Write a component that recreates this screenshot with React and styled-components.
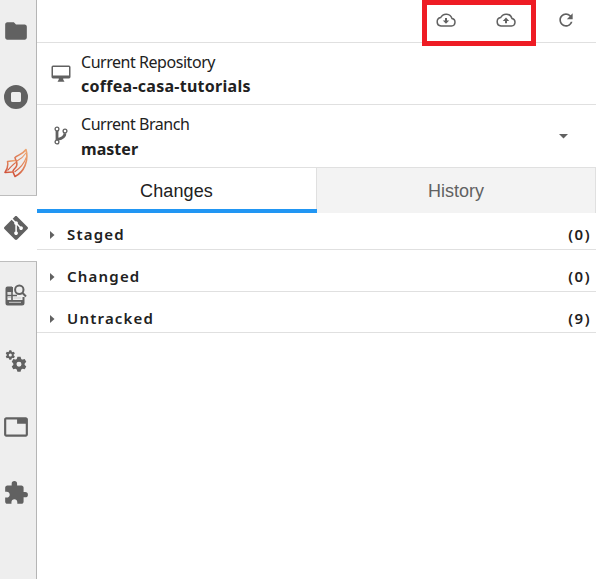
import React from "react";
import styled, { createGlobalStyle } from "styled-components";
import { MdFolder, MdExtension, MdTab, MdRefresh } from "react-icons/md";
import { SiGit } from "react-icons/si";

const GlobalStyle = createGlobalStyle`
  * { box-sizing: border-box; }
  body { margin: 0; background: #fff; overflow: hidden; }
  svg { display: block; flex: none; }
`;

const Shell = styled.div`
  display: grid;
  grid-template-columns: 37px 1fr;
  width: 596px;
  height: 579px;
  background: #fff;
  color: #616161;
`;

const ActivityBar = styled.nav`
  display: flex;
  flex-direction: column;
  background: #eee;
`;

const ActivityButton = styled.div`
  height: ${(p) => p.$height || 66}px;
  padding-top: ${(p) => p.$top || 0}px;
  padding-left: ${(p) => p.$left || 0}px;
  background: ${(p) => (p.$active ? "#fff" : "#eee")};
  border-right: 1px solid ${(p) => (p.$active ? "#fff" : "#b5b5b5")};
`;

const ActiveFrame = styled.div`
  height: 67px;
  border-top: 1px solid #bdbdbd;
  border-bottom: 1px solid #bdbdbd;
`;

const ActivityFill = styled.div`
  flex: 1;
  border-right: 1px solid #b5b5b5;
`;

const Panel = styled.main`
  display: flex;
  flex-direction: column;
  min-width: 0;
`;

const Toolbar = styled.header`
  display: flex;
  height: 43px;
  border-bottom: 1px solid #e0e0e0;
  padding-left: 385px;
`;

const Highlight = styled.div`
  position: relative;
  z-index: 1;
  display: flex;
  gap: 40px;
  width: 114px;
  height: 46px;
  flex: none;
  border: 5px solid #ee1c24;
  padding: 7px 0 0 9px;
`;

const RefreshSlot = styled.div`
  padding: 10px 0 0 20px;
`;

const InfoRow = styled.section`
  display: flex;
  height: ${(p) => p.$height}px;
  border-bottom: 1px solid #e0e0e0;
`;

const InfoIcon = styled.div`
  width: 44px;
  padding: ${(p) => p.$top}px 0 0 ${(p) => p.$left}px;
`;

const InfoText = styled.div`
  flex: 1;
  padding-top: 7px;
  font-family: "Noto Sans", sans-serif;
  font-size: 16px;
  line-height: ${(p) => p.$line}px;
  color: #212121;
`;

const InfoLabel = styled.div`
  letter-spacing: ${(p) => p.$spacing}px;
`;

const InfoValue = styled.div`
  font-weight: 700;
  letter-spacing: ${(p) => p.$spacing}px;
`;

const CaretSlot = styled.div`
  padding: 29px 28px 0 0;
`;

const Tabs = styled.div`
  display: grid;
  grid-template-columns: 280px 1fr;
  grid-template-rows: 45px;
  height: 45px;
  flex: none;
`;

const Tab = styled.div`
  height: 45px;
  border-right: 1px solid #e0e0e0;
  background: #f3f3f3;
  color: #616161;
  font: 18px/46px "Liberation Sans", sans-serif;
  text-align: center;
`;

const ActiveTab = styled(Tab)`
  border-right: 0;
  padding-right: 1px;
  border-bottom: 4px solid #2196f3;
  background: linear-gradient(#e0e0e0, #e0e0e0) right / 1px 100% no-repeat #fff;
  color: #212121;
  letter-spacing: 0.1px;
`;

const FileGroup = styled.div`
  display: flex;
  align-items: flex-start;
  height: ${(p) => p.$height}px;
  padding: ${(p) => p.$top}px 5px 0 12px;
  border-bottom: 1px solid #e0e0e0;
  font: 600 15px/20px "Noto Sans", sans-serif;
  color: #212121;
`;

const GroupCaret = styled.div`
  width: 18px;
  padding: 7px 0 0 1px;
`;

const GroupName = styled.div`
  flex: 1;
  letter-spacing: 1.2px;
`;

const GroupCount = styled.div`
  letter-spacing: 1.5px;
`;

function RunningIcon() {
  return (
    <svg width="24" height="24" viewBox="0 0 24 24">
      <path fill="#616161" fillRule="evenodd" d="M12 0a12 12 0 1 0 0 24 12 12 0 0 0 0-24ZM8.500 7h7A1.500 1.500 0 0 1 17 8.500v7a1.500 1.500 0 0 1-1.500 1.500h-7A1.500 1.500 0 0 1 7 15.500v-7A1.500 1.500 0 0 1 8.500 7Z" />
    </svg>
  );
}

function WingIcon() {
  return (
    <svg width="25" height="30" viewBox="0 0 25 30" fill="none" strokeLinejoin="round">
      <defs>
        <linearGradient id="wing" x1="0" y1="1" x2="1" y2="0">
          <stop offset="0" stopColor="#cf4f38" />
          <stop offset="1" stopColor="#eea873" />
        </linearGradient>
      </defs>
      <g stroke="url(#wing)">
        <path strokeWidth="1.600" d="M22 1.500C19 6 14 7 11 9.500C11.500 13 14 14 12.500 18C11.500 21 8.500 21 9 24L11 28.500C20 24 25 13 22 1.500Z" />
        <path strokeWidth="1.500" d="M11 12.500L3.500 13.500C4.500 18 3.500 21 1 24.500L9 24" />
        <path strokeWidth="1.100" d="M3.500 22.500C6 20 9 16 12 14.500M10.500 24C15 21 20 16 22.500 9M13 13C17 11 20 8 22 5" />
      </g>
    </svg>
  );
}

function TableSearchIcon() {
  return (
    <svg width="22" height="23" viewBox="0 0 22 23" fill="none" stroke="#616161">
      <path d="M7 3.500H2.500Q1.500 3.500 1.500 4.500V19.500Q1.500 20.500 2.500 20.500H17Q18.500 20.500 18.500 19V13" strokeWidth="2" />
      <path fill="#616161" stroke="none" d="M1 3H8V8H1ZM2 16H18V21H2Z" />
      <path d="M7 7V20M2 11.500H12" strokeWidth="1.600" />
      <path d="M3 9H6M3 13.500H6M8.500 14H16M4 18.300H16" stroke="#ccc" />
      <circle cx="14.300" cy="5.800" r="4.200" strokeWidth="2" />
      <path d="M17.300 8.800L21 12.500" strokeWidth="2" />
    </svg>
  );
}

const toothAngles = [0, 60, 120, 180, 240, 300];

function Gear({ x, y, scale }) {
  return (
    <g transform={`translate(${x} ${y}) scale(${scale})`}>
      <circle r="3.900" fill="none" stroke="#616161" strokeWidth="3" />
      {toothAngles.map((a) => (
        <path key={a} transform={`rotate(${a})`} fill="#616161" d="M-2.300 -4.500L-1.500 -7.200H1.500L2.300 -4.500Z" />
      ))}
    </g>
  );
}

function GearsIcon() {
  return (
    <svg width="24" height="24" viewBox="0 0 24 24">
      <Gear x="5.300" y="5" scale="0.650" />
      <Gear x="14" y="14.200" scale="1.040" />
    </svg>
  );
}

function CloudIcon({ up }) {
  return (
    <svg width="20" height="16" viewBox="0 0 20 16">
      <path fill="none" stroke="#616161" strokeWidth="1.500" d="M5 14H15.500A3.800 3.800 0 0 0 16 6.500A6.100 6.100 0 0 0 4.700 5.500A4.300 4.300 0 0 0 5 14Z" />
      <path fill="#616161" d={up ? "M10 5.500L13.200 8.900H11V11.300H9V8.900H6.800Z" : "M10 11.800L6.800 8.400H9V6H11V8.400H13.200Z"} />
    </svg>
  );
}

function MonitorIcon() {
  return (
    <svg width="20" height="18" viewBox="0 0 20 18">
      <path fill="#616161" fillRule="evenodd" d="M2 0.500H18A1.600 1.600 0 0 1 19.500 2V12A1.600 1.600 0 0 1 18 13.500H12.200V14.500L13.500 16.800H6.500L7.800 14.500V13.500H2A1.600 1.600 0 0 1 0.500 12V2A1.600 1.600 0 0 1 2 0.500ZM2 2V10.500H18V2Z" />
    </svg>
  );
}

function BranchIcon() {
  return (
    <svg width="14" height="19" viewBox="0 0 14 19" fill="none" stroke="#616161">
      <path strokeWidth="2.800" d="M3 5V14M11 7.200C11 11 8 12.500 3.500 13.500" />
      <g strokeWidth="1.300" fill="#fff">
        <circle cx="3" cy="3" r="1.900" />
        <circle cx="3" cy="16" r="1.900" />
        <circle cx="11" cy="5" r="1.900" />
      </g>
    </svg>
  );
}

function Caret() {
  return (
    <svg width="5" height="8" viewBox="0 0 5 8">
      <path fill="#616161" d="M0 0L4.500 4L0 8Z" />
    </svg>
  );
}

const groups = [
  { name: "Staged", count: 0, height: 37, top: 11 },
  { name: "Changed", count: 0, height: 42, top: 16 },
  { name: "Untracked", count: 9, height: 41, top: 16 },
];

export default function App() {
  return (
    <Shell>
      <GlobalStyle />
      <ActivityBar>
        <ActivityButton $top={18} $left={3}><MdFolder size={26} /></ActivityButton>
        <ActivityButton $top={19} $left={4}><RunningIcon /></ActivityButton>
        <ActivityButton $height={63} $top={16} $left={4}><WingIcon /></ActivityButton>
        <ActiveFrame>
          <ActivityButton $active $height={65} $top={20} $left={4}><SiGit size={24} /></ActivityButton>
        </ActiveFrame>
        <ActivityButton $top={22} $left={5}><TableSearchIcon /></ActivityButton>
        <ActivityButton $top={22} $left={5}><GearsIcon /></ActivityButton>
        <ActivityButton $top={20} $left={3}><MdTab size={26} /></ActivityButton>
        <ActivityButton $top={20} $left={3}><MdExtension size={26} /></ActivityButton>
        <ActivityFill />
      </ActivityBar>
      <Panel>
        <Toolbar>
          <Highlight><CloudIcon /><CloudIcon up /></Highlight>
          <RefreshSlot><MdRefresh size={20} /></RefreshSlot>
        </Toolbar>
        <InfoRow $height={62}>
          <InfoIcon $top={22} $left={14}><MonitorIcon /></InfoIcon>
          <InfoText $line={24}>
            <InfoLabel $spacing={-0.46}>Current Repository</InfoLabel>
            <InfoValue $spacing={0.27}>coffea-casa-tutorials</InfoValue>
          </InfoText>
        </InfoRow>
        <InfoRow $height={63}>
          <InfoIcon $top={21} $left={17}><BranchIcon /></InfoIcon>
          <InfoText $line={25}>
            <InfoLabel $spacing={-0.46}>Current Branch</InfoLabel>
            <InfoValue $spacing={0.05}>master</InfoValue>
          </InfoText>
          <CaretSlot>
            <svg width="9" height="5" viewBox="0 0 9 5"><path fill="#616161" d="M0 0H9L4.500 4.500Z" /></svg>
          </CaretSlot>
        </InfoRow>
        <Tabs>
          <ActiveTab>Changes</ActiveTab>
          <Tab>History</Tab>
        </Tabs>
        {groups.map((g) => (
          <FileGroup key={g.name} $height={g.height} $top={g.top}>
            <GroupCaret><Caret /></GroupCaret>
            <GroupName>{g.name}</GroupName>
            <GroupCount>({g.count})</GroupCount>
          </FileGroup>
        ))}
      </Panel>
    </Shell>
  );
}
